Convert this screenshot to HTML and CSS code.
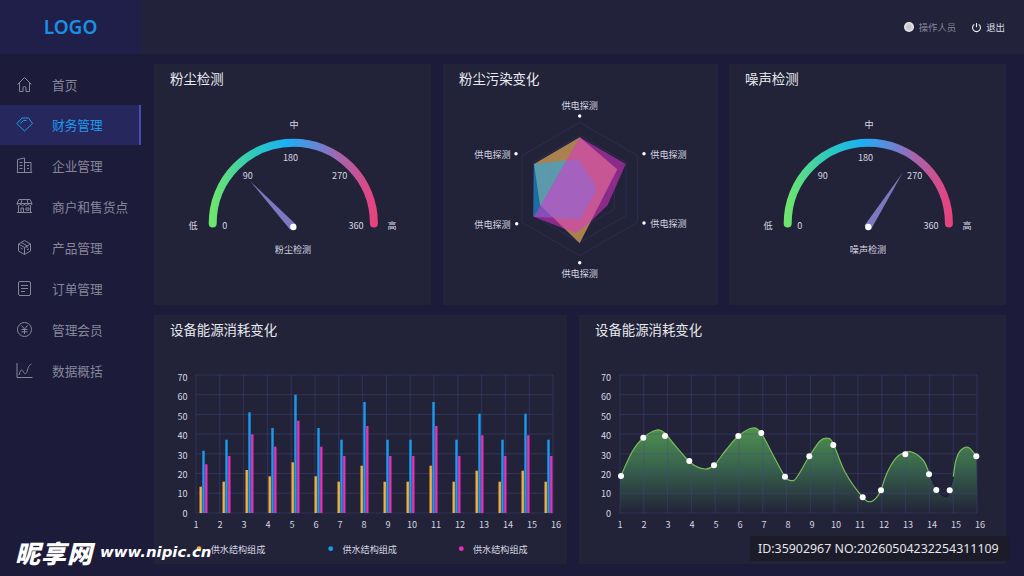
FILE: index.html
```html
<!DOCTYPE html>
<html lang="zh-CN">
<head>
    <meta charset="UTF-8">
    <title>LOGO - 数据面板</title>
    <link rel="stylesheet" href="styles.css">
</head>
<body>
    <div class="app">
        <aside class="sidebar">
            <div class="logo">LOGO</div>
            <nav class="nav">
                <a class="nav-item">
                    <svg class="nav-icon" viewBox="0 0 17 17"><path d="M1.5 8.5L8.5 1.5l7 7M3.5 7v8.5H7v-3.5a1.5 1.5 0 0 1 3 0v3.5h3.5V7"/></svg>
                    <span>首页</span>
                </a>
                <a class="nav-item active">
                    <svg class="nav-icon" viewBox="0 0 17 17"><path d="M6 2h6.5L16.5 7.5 8.5 15 .8 7.5zM4.2 7.5L7.5 4.5h3"/></svg>
                    <span>财务管理</span>
                </a>
                <a class="nav-item">
                    <svg class="nav-icon" viewBox="0 0 17 17"><path d="M1.5 15.5V2.5L8.5 1v14.5M8.5 5.5h6.5v10M.8 15.5h15.4M3.5 5.5h3M3.5 8.5h3M3.5 11.5h3M11 8.5h2M11 11.5h2"/></svg>
                    <span>企业管理</span>
                </a>
                <a class="nav-item">
                    <svg class="nav-icon" viewBox="0 0 17 17"><path d="M3 1.5h11l2 4H1zM1 5.5c0 2.5 3.7 2.5 3.75 0 0 2.5 3.7 2.5 3.75 0 0 2.5 3.7 2.5 3.75 0 0 2.5 3.75 2.5 3.75 0M2.5 8v6.5h12V8M1 14.5h15M6 1.5l-1 4M11 1.5l1 4M5 14v-4h2.5v4M10 10h3v2.2h-3z"/></svg>
                    <span>商户和售货点</span>
                </a>
                <a class="nav-item">
                    <svg class="nav-icon" viewBox="0 0 17 17"><path d="M8.5 1.5l6 3.5v7l-6 3.5-6-3.5V5zM2.5 5l6 3.5 6-3.5M8.5 8.5v7M5 3.3l6 3.5v2.4M4.5 9l2 1.2M11 11l2-1.2"/></svg>
                    <span>产品管理</span>
                </a>
                <a class="nav-item">
                    <svg class="nav-icon" viewBox="0 0 17 17"><rect x="2.5" y="1.5" width="12" height="14" rx="1.5"/><path d="M5 5.5h7M5 8.5h7M5 11.5h4"/></svg>
                    <span>订单管理</span>
                </a>
                <a class="nav-item">
                    <svg class="nav-icon" viewBox="0 0 17 17"><circle cx="8.5" cy="8.5" r="7"/><path d="M5.5 4.5l3 3.5 3-3.5M8.5 8v5M5.5 8.5h6M5.5 10.8h6"/></svg>
                    <span>管理会员</span>
                </a>
                <a class="nav-item">
                    <svg class="nav-icon" viewBox="0 0 17 17"><path d="M1 1v14.5h15.5M3 13c1.5-6 3-6 4.5-3s3 2 4-2 2-5 4-6"/></svg>
                    <span>数据概括</span>
                </a>
            </nav>
        </aside>

        <div class="content">
            <header class="topbar">
                <span class="avatar"></span>
                <span class="user-name">操作人员</span>
                <svg class="power" viewBox="0 0 12 12"><path d="M3.6 2.6a4.3 4.3 0 1 0 4.8 0M6 1v4.6"/></svg>
                <span class="logout">退出</span>
            </header>

            <main class="main">
                <div class="row row-top">
                    <section class="card card-gauge">
                        <h2>粉尘检测</h2>
                        <svg class="chart" viewBox="154 94 277 211">
                            <defs>
                                <linearGradient id="arcGrad" x1="0" y1="0" x2="1" y2="0">
                                    <stop offset="0" stop-color="#6ee56e"/>
                                    <stop offset=".26" stop-color="#2cc8c0"/>
                                    <stop offset=".46" stop-color="#1cb0f6"/>
                                    <stop offset=".62" stop-color="#5a8bdb"/>
                                    <stop offset=".78" stop-color="#a466ae"/>
                                    <stop offset="1" stop-color="#e6437f"/>
                                </linearGradient>
                            </defs>
                            <path class="arc" d="M212.7 223.4a80.6 80.6 0 0 1 161.2 0"/>
                            <polygon class="needle" points="250,181 296,224.5 290,229.5"/>
                            <circle class="dot" cx="293.3" cy="227" r="3.2"/>
                            <text x="294" y="124">中</text>
                            <text x="290.5" y="156.5">180</text>
                            <text x="247.7" y="175">90</text>
                            <text x="339.7" y="175">270</text>
                            <text x="224.7" y="225">0</text>
                            <text x="356" y="225">360</text>
                            <text x="193" y="225">低</text>
                            <text x="392" y="225">高</text>
                            <text x="293" y="248.5">粉尘检测</text>
                        </svg>
                    </section>

                    <section class="card card-radar">
                        <h2>粉尘污染变化</h2>
                        <svg class="chart" viewBox="443 94 275 211">
                            <polygon class="ring" points="579.7,122.3 637.4,155.7 637.4,222.3 579.7,255.7 522,222.3 522,155.7"/>
                            <polygon class="ring" points="579.7,135.6 625.9,162.3 625.9,215.7 579.7,242.4 533.5,215.7 533.5,162.3"/>
                            <polygon class="ring" points="579.7,149 614.3,169 614.3,209 579.7,229 545.1,209 545.1,169"/>
                            <polygon class="shape-orange" points="579.7,137.3 617.3,169.3 579.7,243.3 540,205 534,164"/>
                            <polygon class="shape-blue" points="534,164 578.3,159.3 595.3,185 595.3,193.3 579.7,219.3 533.3,216.7"/>
                            <polygon class="shape-pink" points="579.7,137.3 625.7,164 607.7,205 584,228 575,233 534,216.7"/>
                            <circle class="dot" cx="579.7" cy="116" r="1.7"/>
                            <circle class="dot" cx="644" cy="153.7" r="1.7"/>
                            <circle class="dot" cx="644" cy="223" r="1.7"/>
                            <circle class="dot" cx="579.7" cy="262.7" r="1.7"/>
                            <circle class="dot" cx="516.7" cy="223.7" r="1.7"/>
                            <circle class="dot" cx="516" cy="153.7" r="1.7"/>
                            <text x="579.7" y="105">供电探测</text>
                            <text x="668.5" y="154">供电探测</text>
                            <text x="668.5" y="223">供电探测</text>
                            <text x="579.7" y="273">供电探测</text>
                            <text x="492.5" y="224">供电探测</text>
                            <text x="492.5" y="154">供电探测</text>
                        </svg>
                    </section>

                    <section class="card card-gauge-last">
                        <h2>噪声检测</h2>
                        <svg class="chart" viewBox="729 94 277 211">
                            <path class="arc" d="M787.7 223.4a80.6 80.6 0 0 1 161.2 0"/>
                            <polygon class="needle" points="902.7,172.7 871.5,228.5 864.5,225.5"/>
                            <circle class="dot" cx="868.3" cy="227" r="3.2"/>
                            <text x="869" y="124">中</text>
                            <text x="865.5" y="156.5">180</text>
                            <text x="822.7" y="175">90</text>
                            <text x="914.7" y="175">270</text>
                            <text x="799.7" y="225">0</text>
                            <text x="931" y="225">360</text>
                            <text x="768" y="225">低</text>
                            <text x="967" y="225">高</text>
                            <text x="868" y="248.5">噪声检测</text>
                        </svg>
                    </section>
                </div>

                <div class="row row-bottom">
                    <section class="card card-bars">
                        <h2>设备能源消耗变化</h2>
                        <svg class="chart" id="barChart" viewBox="154 345 413 219"></svg>
                    </section>
                    <section class="card card-line">
                        <h2>设备能源消耗变化</h2>
                        <svg class="chart" id="lineChart" viewBox="579 345 427 219"></svg>
                    </section>
                </div>
            </main>
        </div>
    </div>

    <div class="mark-site"><b>昵享网</b><i>www.nipic.cn</i></div>
    <div class="mark-id">ID:35902967 NO:20260504232254311109</div>

    <script src="charts.js"></script>
</body>
</html>
```

FILE: styles.css
```css
* {
    box-sizing: border-box;
}

body {
    margin: 0;
    width: 1024px;
    height: 576px;
    overflow: hidden;
    background: #1c1c3a;
    font-family: "Noto Sans CJK SC", "Noto Sans", sans-serif;
}

.app {
    display: flex;
    height: 576px;
}

.sidebar {
    width: 141px;
    flex: none;
}

.logo {
    height: 54px;
    padding-bottom: 1px;
    display: flex;
    align-items: center;
    justify-content: center;
    background: #1f1f49;
    color: #1a8fe3;
    font-family: "Noto Sans", sans-serif;
    font-size: 19px;
    font-weight: 600;
}

.nav {
    padding-top: 10px;
}

.nav-item {
    height: 41px;
    padding-left: 16px;
    display: flex;
    align-items: center;
    gap: 19px;
    color: #85869a;
    font-size: 12.7px;
}

.nav-item.active {
    height: 40px;
    padding-bottom: 1px;
    background: #26275c;
    border-right: 2px solid #474caf;
    color: #1e9bf0;
}

.nav-icon {
    width: 17px;
    height: 17px;
    flex: none;
    fill: none;
    stroke: #85869a;
    stroke-width: 1;
}

.active .nav-icon {
    stroke: #1e9bf0;
}

.content {
    flex: 1;
    min-width: 0;
}

.topbar {
    height: 54px;
    padding-right: 19px;
    display: flex;
    align-items: center;
    justify-content: flex-end;
    background: #22233a;
    font-size: 9.4px;
}

.avatar {
    width: 10px;
    height: 10px;
    margin-right: 5px;
    border-radius: 50%;
    background: radial-gradient(circle, #c9c9cf 30%, #f1f1f3 75%);
}

.user-name {
    color: #85869a;
    margin-right: 15px;
}

.power {
    width: 11px;
    height: 11px;
    margin-right: 4px;
    fill: none;
    stroke: #eeeef2;
    stroke-width: 1.2;
}

.logout {
    color: #dcdde4;
}

.main {
    padding: 10px 18px 12px 13px;
}

.row {
    display: flex;
    gap: 12px;
}

.row-top {
    height: 241px;
    margin-bottom: 10px;
}

.row-bottom {
    height: 249px;
}

.card {
    background: #222338;
    display: flex;
    flex-direction: column;
}

.card-gauge {
    width: 277px;
}

.card-radar {
    width: 275px;
}

.card-gauge-last {
    flex: 1;
    margin-left: -1px;
}

.card-bars {
    width: 413px;
}

.card-line {
    flex: 1;
}

.card h2 {
    margin: 0;
    padding-left: 16px;
    height: 30px;
    line-height: 28px;
    color: #e8e9ef;
    font-size: 13.4px;
    font-weight: 400;
}

.chart {
    display: block;
    flex: 1;
    min-height: 0;
}

.chart text {
    fill: #d6d7e0;
    font-size: 9.1px;
    text-anchor: middle;
    dominant-baseline: central;
}

.chart text.tick-y {
    text-anchor: end;
}

.chart text.legend {
    text-anchor: start;
}

.arc {
    fill: none;
    stroke: url(#arcGrad);
    stroke-width: 8;
    stroke-linecap: round;
}

.needle {
    fill: #7d78c0;
}

.dot {
    fill: #ffffff;
}

.ring {
    fill: none;
    stroke: #2c2d52;
    stroke-width: 1;
}

.shape-orange {
    fill: rgba(227, 169, 89, 0.7);
}

.shape-blue {
    fill: rgba(23, 176, 255, 0.53);
}

.shape-pink {
    fill: rgba(224, 51, 205, 0.55);
}

.grid-line {
    stroke: rgba(72, 72, 135, 0.42);
    stroke-width: 1;
}

.bar-orange {
    fill: #f5ae3c;
}

.bar-blue {
    fill: #1b9bf0;
}

.bar-pink {
    fill: #e92fb5;
}

.curve {
    fill: none;
    stroke: #79bb58;
    stroke-width: 1.2;
}

.curve-dark {
    fill: none;
    stroke: #1d1e33;
    stroke-width: 1.2;
}

.mark-site {
    position: absolute;
    left: 15px;
    top: 534px;
    display: flex;
    align-items: center;
    gap: 7px;
    color: #ffffff;
    white-space: nowrap;
}

.mark-site b {
    font-size: 25px;
    font-weight: 900;
    font-style: italic;
    letter-spacing: 1px;
}

.mark-site i {
    font-family: "DejaVu Sans", sans-serif;
    font-size: 14.9px;
    font-weight: 700;
}

.mark-id {
    position: absolute;
    left: 750px;
    top: 536px;
    width: 259px;
    height: 25px;
    padding-left: 8px;
    background: #1b1b2a;
    color: #e6e6ea;
    font-family: "Noto Sans", sans-serif;
    font-size: 12.4px;
    line-height: 25px;
    white-space: nowrap;
}
```

FILE: charts.js
```js
// draws the two bottom charts into their svg elements
const rowY = [375, 394.7, 414.4, 434.1, 453.8, 473.5, 493.2, 513];

function gridLines(left, right) {
    let out = '';
    rowY.forEach(function (y) {
        out += `<line class="grid-line" x1="${left}" x2="${right}" y1="${y}" y2="${y}"/>`;
    });
    for (let i = 0; i < 16; i++) {
        const x = left + i * (right - left) / 15;
        out += `<line class="grid-line" x1="${x}" x2="${x}" y1="375" y2="513"/>`;
    }
    return out;
}

function axisLabels(left, tickRight) {
    let out = '';
    for (let i = 0; i < 8; i++) {
        out += `<text class="tick-y" x="${tickRight}" y="${377 + i * 19.4}">${70 - i * 10}</text>`;
    }
    for (let i = 0; i < 16; i++) {
        out += `<text x="${left + i * 24}" y="523.5">${i + 1}</text>`;
    }
    return out;
}

// bar tops, read as y pixels
const orangeTops = [486.7, 481.7, 470, 476.3, 462.3, 476.3, 481.7, 465.7, 481.7, 481.7, 465.7, 481.7, 470.7, 481.7, 470.7, 481.7];
const blueTops = [450.7, 439.7, 412.3, 428, 394.7, 428, 439.7, 402, 439.7, 439.7, 402, 439.7, 413.7, 439.7, 413.7, 439.7];
const pinkTops = [464.3, 456, 434.3, 446.7, 420.7, 446.7, 456, 426, 456, 456, 426, 456, 435.3, 456, 435.3, 456];

function drawBars() {
    let out = gridLines(196, 553);
    for (let i = 0; i < 16; i++) {
        const x = 199.5 + i * 23;
        out += `<rect class="bar-orange" x="${x}" y="${orangeTops[i]}" width="2.4" height="${513 - orangeTops[i]}"/>`;
        out += `<rect class="bar-blue" x="${x + 2.8}" y="${blueTops[i]}" width="2.4" height="${513 - blueTops[i]}"/>`;
        out += `<rect class="bar-pink" x="${x + 5.6}" y="${pinkTops[i]}" width="2.4" height="${513 - pinkTops[i]}"/>`;
    }
    out += axisLabels(196, 187.5);
    const legendColors = ['#f5ae3c', '#1b9bf0', '#e92fb5'];
    [199, 330.7, 461.3].forEach(function (x, i) {
        out += `<circle cx="${x}" cy="548.7" r="2.4" fill="${legendColors[i]}"/>`;
        out += `<text class="legend" x="${x + 11.7}" y="549">供水结构组成</text>`;
    });
    document.getElementById('barChart').innerHTML = out;
}

// catmull-rom through the points, as bezier segments
function smooth(pts) {
    let d = '';
    for (let i = 0; i < pts.length - 1; i++) {
        const p0 = pts[i - 1] || pts[i];
        const p1 = pts[i];
        const p2 = pts[i + 1];
        const p3 = pts[i + 2] || p2;
        const c1x = p1[0] + (p2[0] - p0[0]) / 6;
        const c1y = p1[1] + (p2[1] - p0[1]) / 6;
        const c2x = p2[0] - (p3[0] - p1[0]) / 6;
        const c2y = p2[1] - (p3[1] - p1[1]) / 6;
        d += `C${c1x} ${c1y} ${c2x} ${c2y} ${p2[0]} ${p2[1]}`;
    }
    return d;
}

const curve = [[620, 478], [632, 452], [643.3, 437.7], [656.7, 430], [665, 433], [673, 443], [691, 463], [705, 469],
    [714, 465.3], [726, 450], [738.3, 436], [752.3, 428], [761, 433], [773, 455], [785, 476.7], [791.7, 480.7],
    [797, 477], [809.3, 456.3], [820, 441], [827.3, 438.3], [833, 443], [845, 472], [862.7, 497.3], [870.7, 501.7],
    [877, 497], [881, 490], [885, 478], [890, 467], [898, 456], [910, 451.7], [923, 460], [929, 473],
    [936, 488], [943, 495.7], [948, 495], [953.3, 476.7], [956, 460], [961, 450], [969, 447.7], [976.5, 456.7]];

const dots = [[621, 476], [643.3, 437.7], [665, 436], [689.3, 461], [714, 465.3], [738.3, 436], [761.3, 433], [785, 476.7],
    [809.3, 456.3], [833.3, 445], [862.7, 497.3], [881, 490.3], [905.3, 454.3], [929, 474.3], [936.3, 490], [949.7, 490.3], [976.3, 456.3]];

function startOf(pts) {
    return `M${pts[0][0]} ${pts[0][1]}`;
}

function drawLine() {
    const first = curve.slice(0, 32);
    const middle = curve.slice(31, 36);
    const last = curve.slice(35);
    let out = `<defs><linearGradient id="areaGrad" gradientUnits="userSpaceOnUse" x1="0" y1="428" x2="0" y2="513">
        <stop offset="0" stop-color="#4f9150"/><stop offset=".45" stop-color="#38644c"/><stop offset="1" stop-color="#222338"/>
    </linearGradient></defs>`;
    out += `<path fill="url(#areaGrad)" d="${startOf(curve)}${smooth(curve)}L977 513L620 513Z"/>`;
    out += gridLines(620, 977);
    out += `<path class="curve" d="${startOf(first)}${smooth(first)}"/>`;
    out += `<path class="curve-dark" d="${startOf(middle)}${smooth(middle)}"/>`;
    out += `<path class="curve" d="${startOf(last)}${smooth(last)}"/>`;
    dots.forEach(function (p) {
        out += `<circle class="dot" cx="${p[0]}" cy="${p[1]}" r="3"/>`;
    });
    out += axisLabels(620, 611);
    document.getElementById('lineChart').innerHTML = out;
}

drawBars();
drawLine();
```
